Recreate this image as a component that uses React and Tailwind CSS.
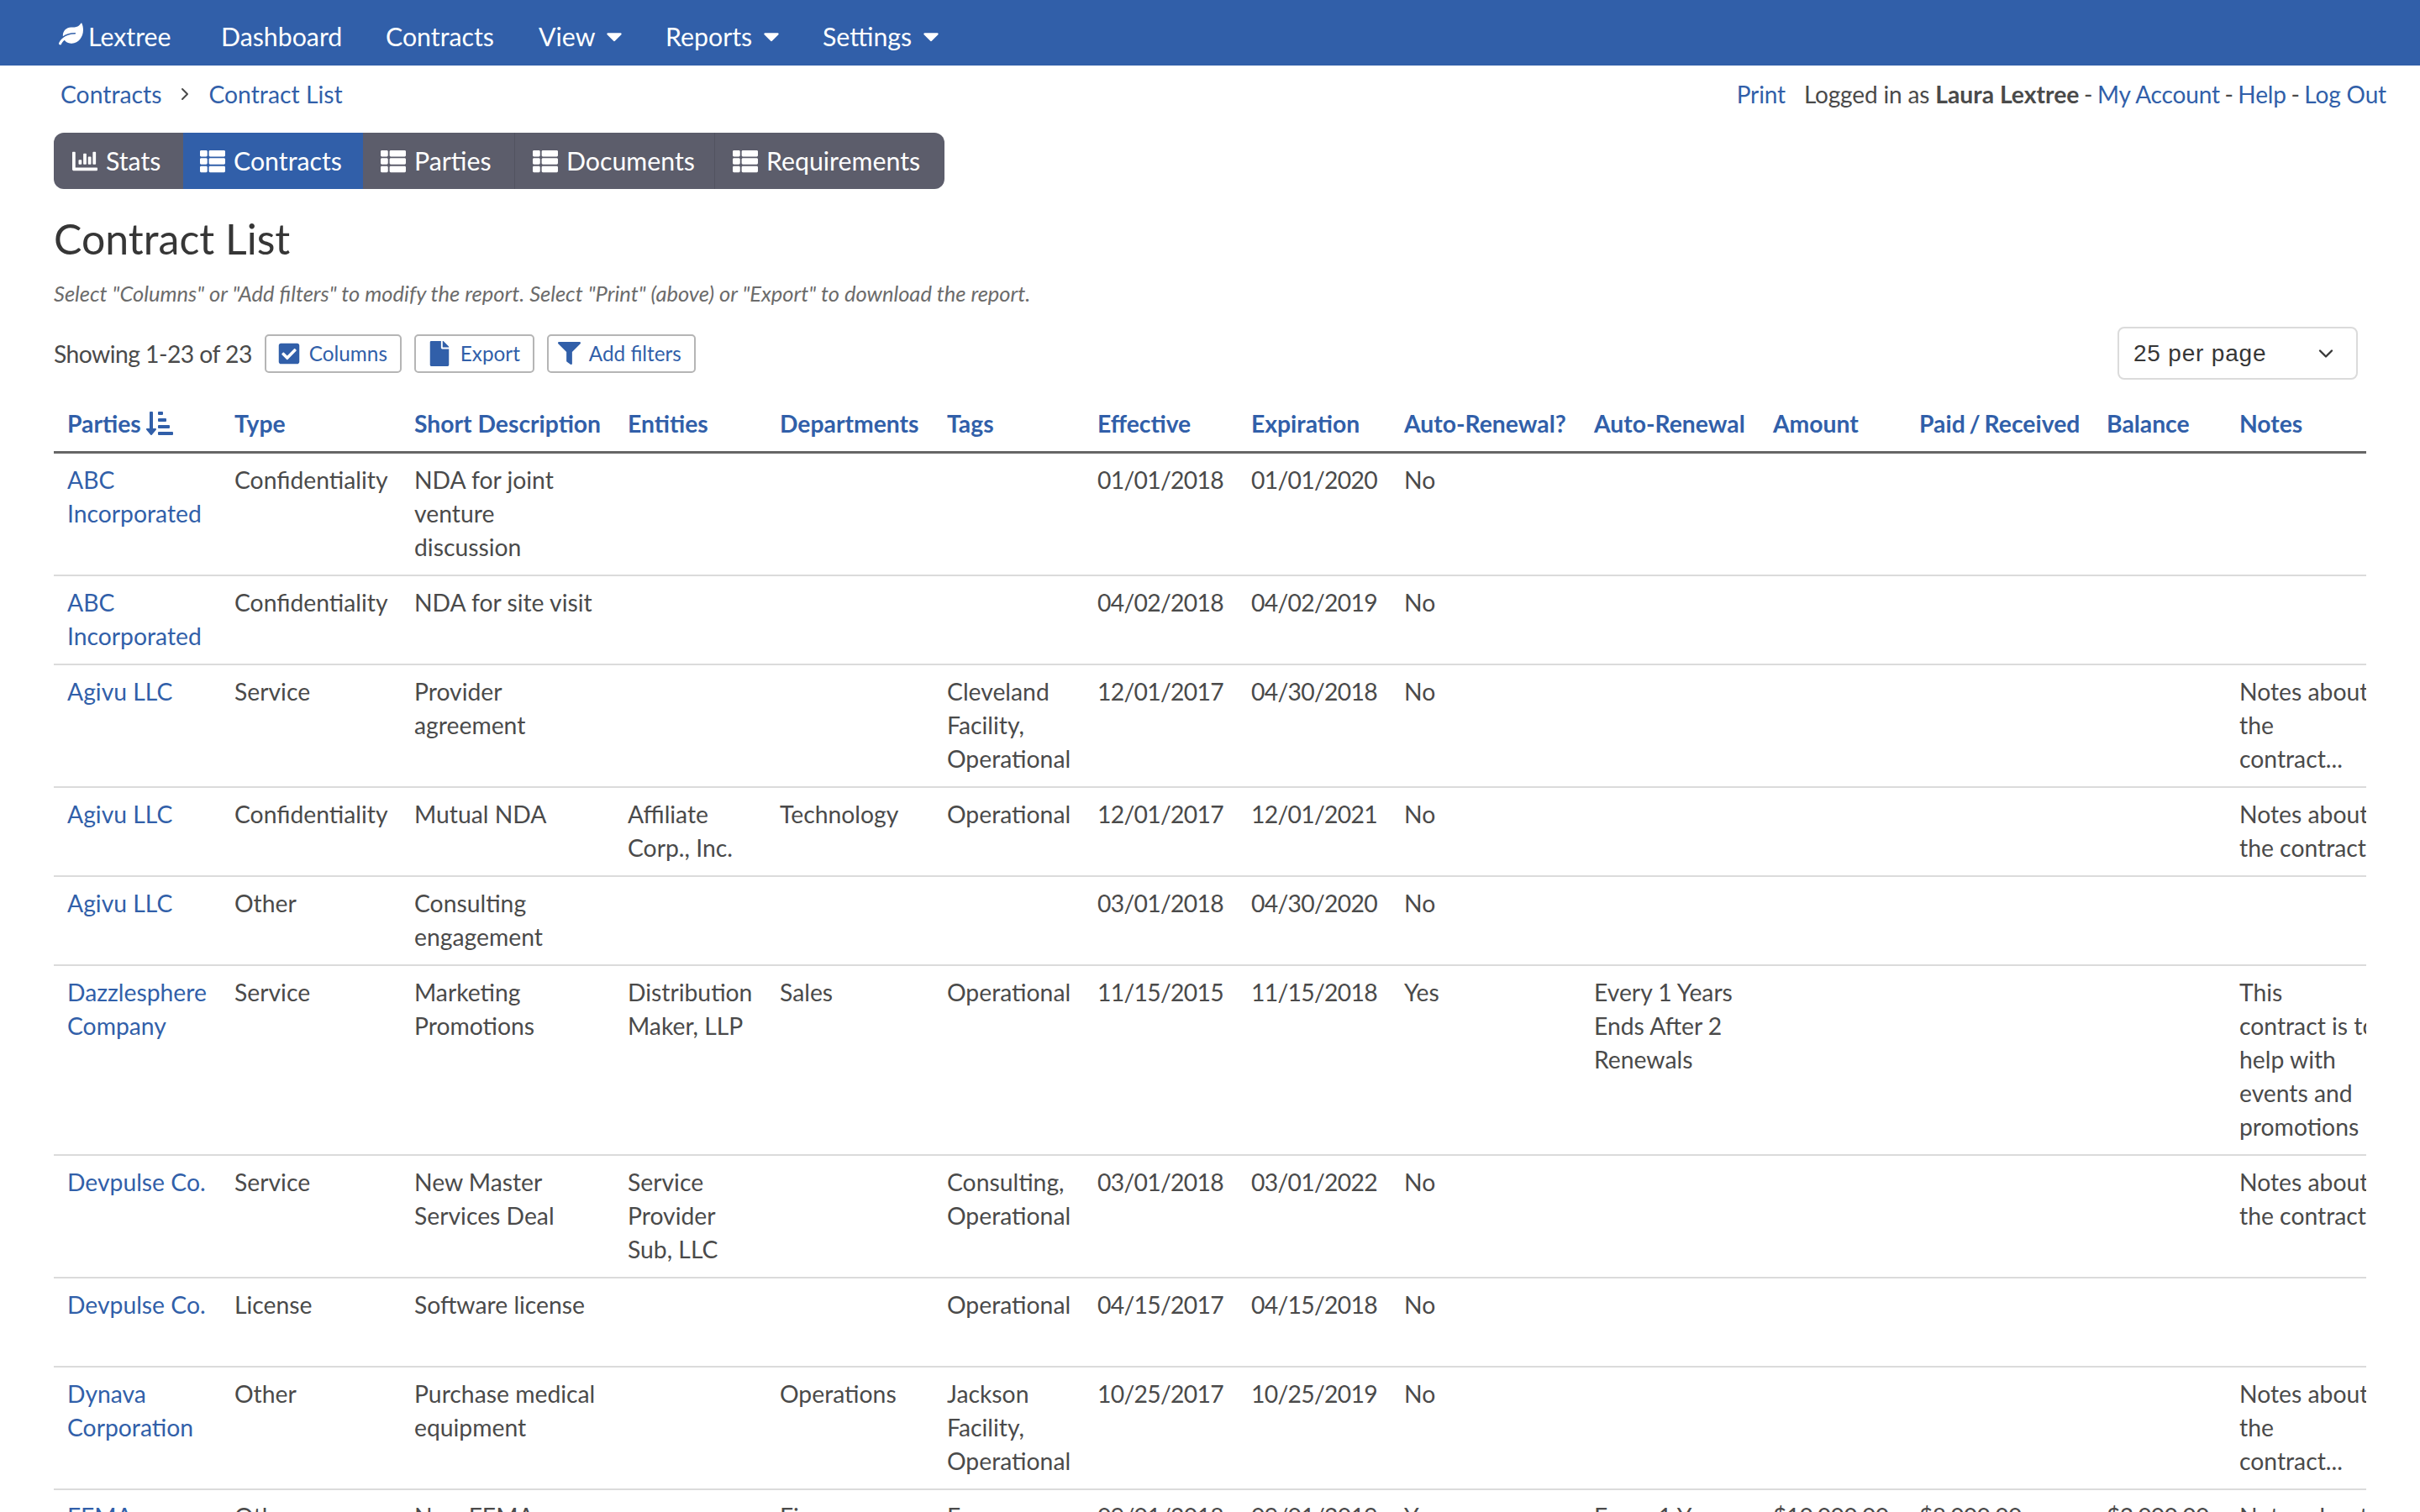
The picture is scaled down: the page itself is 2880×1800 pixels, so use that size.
import React from "react";
import { FaLeaf, FaChartBar, FaThList, FaCheckSquare, FaFile, FaFilter, FaSortAmountDownAlt, FaCaretDown } from "react-icons/fa";
import { LuChevronRight, LuChevronDown } from "react-icons/lu";

const A = ({ children, className = "" }) => <a className={`text-[#315fa9] ${className}`}>{children}</a>;

const heads = ["Parties", "Type", "Short Description", "Entities", "Departments", "Tags", "Effective", "Expiration", "Auto-Renewal?", "Auto-Renewal", "Amount", "Paid / Received", "Balance", "Notes"];
const widths = ["w-[199px]", "w-[214px]", "w-[254px]", "w-[181px]", "w-[199px]", "w-[179px]", "w-[183px]", "w-[182px]", "w-[226px]", "w-[213px]", "w-[174px]", "w-[223px]", "w-[158px]", "w-[189px]"];

const rows = [
  ["ABC Incorporated", "Confidentiality", "NDA for joint venture discussion", "", "", "", "01/01/2018", "01/01/2020", "No", "", "", "", "", ""],
  ["ABC Incorporated", "Confidentiality", "NDA for site visit", "", "", "", "04/02/2018", "04/02/2019", "No", "", "", "", "", ""],
  ["Agivu LLC", "Service", "Provider agreement", "", "", "Cleveland Facility, Operational", "12/01/2017", "04/30/2018", "No", "", "", "", "", "Notes about\nthe\ncontract..."],
  ["Agivu LLC", "Confidentiality", "Mutual NDA", "Affiliate Corp., Inc.", "Technology", "Operational", "12/01/2017", "12/01/2021", "No", "", "", "", "", "Notes about\nthe contract"],
  ["Agivu LLC", "Other", "Consulting engagement", "", "", "", "03/01/2018", "04/30/2020", "No", "", "", "", "", ""],
  ["Dazzlesphere Company", "Service", "Marketing Promotions", "Distribution Maker, LLP", "Sales", "Operational", "11/15/2015", "11/15/2018", "Yes", "Every 1 Years Ends After 2 Renewals", "", "", "", "This\ncontract is to\nhelp with\nevents and\npromotions"],
  ["Devpulse Co.", "Service", "New Master Services Deal", "Service Provider Sub, LLC", "", "Consulting, Operational", "03/01/2018", "03/01/2022", "No", "", "", "", "", "Notes about\nthe contract"],
  ["Devpulse Co.", "License", "Software license", "", "", "Operational", "04/15/2017", "04/15/2018", "No", "", "", "", "", "\u00a0\n\u00a0"],
  ["Dynava Corporation", "Other", "Purchase medical equipment", "", "Operations", "Jackson Facility, Operational", "10/25/2017", "10/25/2019", "No", "", "", "", "", "Notes about\nthe\ncontract..."],
  ["FEMA", "Other", "New FEMA Contract", "", "Finance", "Emergency", "09/01/2018", "09/01/2019", "Yes", "Every 1 Years", "$10,000.00", "$8,000.00", "$2,000.00", "Notes about\nthe contract"],
];

const Caret = () => <FaCaretDown className="text-[30px] ml-[8px]" />;

function NavItem({ children, caret, className = "" }) {
  return (
    <span className={`flex items-center ${className}`}>
      {children}
      {caret && <Caret />}
    </span>
  );
}

function Tab({ icon, label, active, border, className = "" }) {
  return (
    <div className={`flex items-center h-full text-[30.3px] text-white gap-[10px] ${active ? "bg-[#315fa9]" : ""} ${border ? "border-l border-[#525360]" : ""} ${className}`}>
      {icon}
      <span className="-mt-[2px]">{label}</span>
    </div>
  );
}

function Btn({ icon, label, className = "" }) {
  return (
    <div className={`flex items-center h-[46px] border-2 border-[#b5b5b5] rounded-[5px] text-[24.3px] text-[#315fa9] bg-white ${className}`}>
      {icon}
      <span>{label}</span>
    </div>
  );
}

const Sep = () => <span className="inline-block w-[21.5px] text-center">-</span>;

function cellClass(j) {
  const tight = j === 6 || j === 7 || j === 10 || j === 11 || j === 12;
  const last = j === 13;
  return `px-[16px] pt-[11px] pb-[13px] align-top ${last ? "whitespace-pre" : "whitespace-pre-line"} ${tight ? "tracking-[-0.7px]" : ""}`;
}

export default function App() {
  return (
    <div className="w-[2880px] h-[1800px] overflow-hidden bg-white text-[#4a4a4a] text-[28.3px] leading-[40px] font-['Lato',sans-serif]">
      <nav className="flex items-center h-[78px] pt-[7px] bg-[#315fa9] text-white text-[30.3px] pl-[70px]">
        <NavItem className="w-[193px]">
          <FaLeaf className="text-[29px] mr-[6px] -mt-[4px]" />
          Lextree
        </NavItem>
        <NavItem className="w-[196px]">Dashboard</NavItem>
        <NavItem className="w-[182px]">Contracts</NavItem>
        <NavItem caret className="w-[151px]">View</NavItem>
        <NavItem caret className="w-[187px]">Reports</NavItem>
        <NavItem caret>Settings</NavItem>
      </nav>

      <div className="flex items-center justify-between h-[68px] pl-[72px] pr-[40px]">
        <div className="flex items-center">
          <A>Contracts</A>
          <LuChevronRight className="text-[24px] mx-[16px] text-[#4a4a4a]" />
          <A>Contract List</A>
        </div>
        <div className="flex items-center whitespace-pre text-[28px] tracking-[-0.15px]">
          <A className="mr-[22px]">Print</A>
          <span>Logged in as </span>
          <b className="font-bold text-[28.3px] tracking-normal">Laura Lextree</b>
          <Sep />
          <A>My Account</A>
          <Sep />
          <A>Help</A>
          <Sep />
          <A>Log Out</A>
        </div>
      </div>

      <div className="px-[64px]">
        <div className="flex items-center w-[1060px] h-[67px] mt-[12px] bg-[#5c5d6b] rounded-[12px] overflow-hidden">
          <Tab icon={<FaChartBar className="text-[30px]" />} label="Stats" className="w-[154px] pl-[22px]" />
          <Tab icon={<FaThList className="text-[30px]" />} label="Contracts" active className="w-[214px] pl-[20px]" />
          <Tab icon={<FaThList className="text-[30px]" />} label="Parties" className="w-[180px] pl-[21px]" />
          <Tab icon={<FaThList className="text-[30px]" />} label="Documents" border className="w-[238px] pl-[21px]" />
          <Tab icon={<FaThList className="text-[30px]" />} label="Requirements" border className="flex-1 pl-[21px]" />
        </div>

        <h1 className="text-[50px] leading-[60px] text-[#363636] mt-[29px]">Contract List</h1>
        <p className="text-[25.5px] leading-[36px] italic text-[#6b6b6b] mt-[17px]">
          Select "Columns" or "Add filters" to modify the report. Select "Print" (above) or "Export" to download the report.
        </p>

        <div className="flex items-center justify-between mt-[22px] pr-[10px]">
          <div className="flex items-center">
            <span className="tracking-[-0.55px]">Showing 1-23 of 23</span>
            <Btn icon={<FaCheckSquare className="text-[28px] mr-[10px]" />} label="Columns" className="ml-[15px] w-[163px] pl-[13px]" />
            <Btn icon={<FaFile className="text-[30px] mr-[10px]" />} label="Export" className="ml-[15px] w-[143px] pl-[13px]" />
            <Btn icon={<FaFilter className="text-[27px] mr-[10px]" />} label="Add filters" className="ml-[15px] w-[177px] pl-[11px]" />
          </div>
          <div className="flex items-center justify-between w-[286px] h-[63px] border-2 border-[#dbdbdb] rounded-[8px] pl-[17px] pr-[22px] font-['Liberation_Sans',sans-serif] text-[28px] tracking-[0.8px] text-[#363636]">
            <span>25 per page</span>
            <LuChevronDown className="text-[28px]" />
          </div>
        </div>

        <div className="w-[2752px] overflow-hidden mt-[17px]">
          <table className="table-fixed w-[2774px] border-collapse">
            <colgroup>
              {widths.map((w, i) => <col key={i} className={w} />)}
            </colgroup>
            <thead>
              <tr className="border-b-[3px] border-[#666666]">
                {heads.map((h, i) => (
                  <th key={h} className={`px-[16px] pt-[15px] pb-[13px] text-left font-bold text-[#315fa9] align-top whitespace-nowrap ${i === 11 ? "[word-spacing:-2px]" : ""}`}>
                    <span className="inline-flex items-center">
                      {h}
                      {i === 0 && <FaSortAmountDownAlt className="text-[32px] ml-[6px]" />}
                    </span>
                  </th>
                ))}
              </tr>
            </thead>
            <tbody>
              {rows.map((r, i) => (
                <tr key={i} className="border-b-2 border-[#dbdbdb]">
                  {r.map((c, j) => (
                    <td key={j} className={cellClass(j)}>
                      {j === 0 ? <A>{c}</A> : c}
                    </td>
                  ))}
                </tr>
              ))}
            </tbody>
          </table>
        </div>
      </div>
    </div>
  );
}
